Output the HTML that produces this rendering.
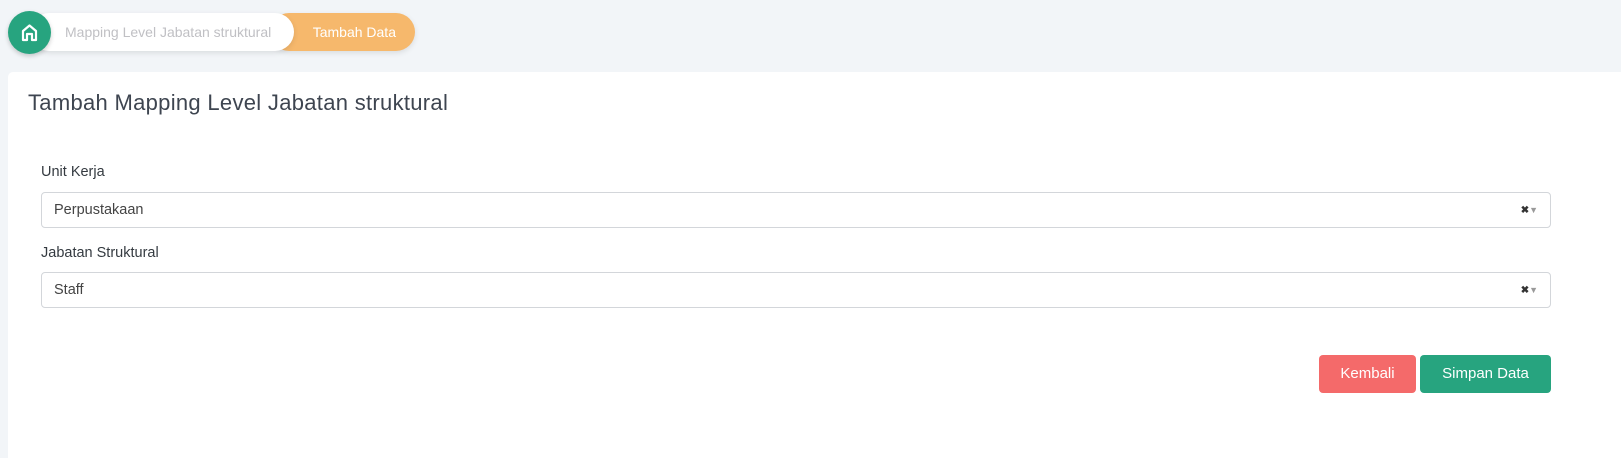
<!DOCTYPE html>
<html><head><style>
body{margin:0;width:1621px;height:458px;background:#f2f5f8;font-family:"Liberation Sans",sans-serif;position:relative;overflow:hidden}
.a{position:absolute}
.crumb{left:30px;top:13px;width:264px;height:38px;background:#fff;border-radius:19px;box-shadow:0 2px 6px rgba(0,0,0,.1)}
.crumb2{left:270px;top:13px;width:145px;height:38px;background:#f6b86c;border-radius:19px;color:#fff;font-size:14px;line-height:38px;text-align:right;padding-right:19px;box-sizing:border-box;box-shadow:0 2px 6px rgba(0,0,0,.1)}
.home{left:8px;top:11px;width:43px;height:43px;border-radius:50%;background:#27a47f;box-shadow:0 2px 5px rgba(0,0,0,.2)}
.card{left:8px;top:72px;width:1613px;height:386px;background:#fff;border-radius:5px 0 0 0}
.lbl{font-size:14.5px;color:#343a40;left:41px}
.inp{left:41px;height:36px;border:1px solid #d3d6da;border-radius:4px;font-size:14.5px;color:#444;line-height:35px;padding-left:12px;box-sizing:border-box;width:1510px}
.x{right:12px;top:0;font-size:10px;color:#333;font-weight:bold}
.btn{top:355px;height:38px;border-radius:4px;color:#fff;font-size:15px;line-height:38px;text-align:center}
</style></head><body>
<div class="a crumb2">Tambah Data</div>
<div class="a crumb"><span class="a" style="left:35px;top:11px;font-size:14px;color:#c0c0c4">Mapping Level Jabatan struktural</span></div>
<div class="a home"><svg width="43" height="43" viewBox="0 0 43 43"><path d="M15 29V20L21.5 14.5 28 20V29H24V23H19V29Z" fill="none" stroke="#fff" stroke-width="2.2" stroke-linejoin="round"/></svg></div>
<div class="a card"></div>
<div class="a" style="left:28px;top:90px;font-size:22px;color:#3e4550;letter-spacing:0.3px">Tambah Mapping Level Jabatan struktural</div>
<div class="a lbl" style="top:164px">Unit Kerja</div>
<div class="a inp" style="top:192px">Perpustakaan<span class="a x">✖<span style="color:#999;font-size:9px">▼</span></span></div>
<div class="a lbl" style="top:245px">Jabatan Struktural</div>
<div class="a inp" style="top:272px">Staff<span class="a x">✖<span style="color:#999;font-size:9px">▼</span></span></div>
<div class="a btn" style="left:1319px;width:97px;background:#f46a6a">Kembali</div>
<div class="a btn" style="left:1420px;width:131px;background:#27a47f">Simpan Data</div>
</body></html>
